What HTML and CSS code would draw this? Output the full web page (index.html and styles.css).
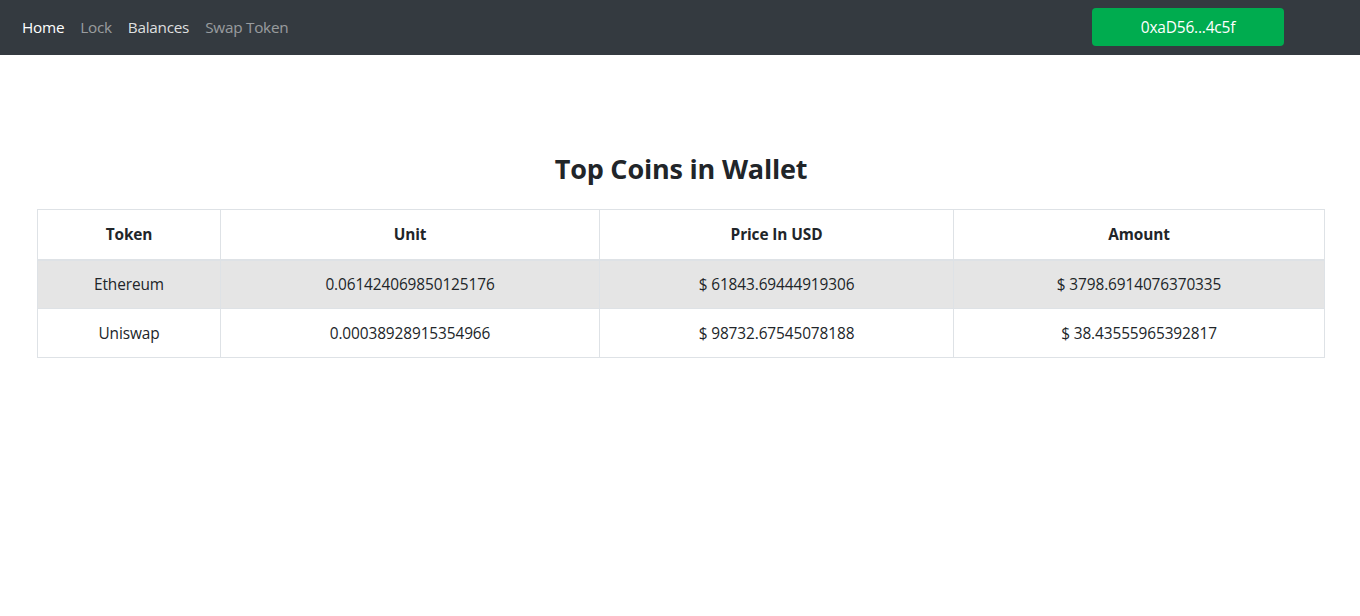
FILE: index.html
```html
<!DOCTYPE html>
<html lang="en">
<head>
<meta charset="utf-8">
<title>Top Coins in Wallet</title>
<link rel="stylesheet" href="styles.css">
</head>
<body>
<nav class="navbar">
  <div class="nav-links">
    <a class="nav-link active" href="#">Home</a>
    <a class="nav-link" href="#">Lock</a>
    <a class="nav-link hover" href="#">Balances</a>
    <a class="nav-link" href="#">Swap Token</a>
  </div>
  <button class="wallet-btn" type="button">0xaD56...4c5f</button>
</nav>
<main class="content">
  <h1 class="title">Top Coins in Wallet</h1>
  <table class="coins">
    <thead>
      <tr>
        <th class="c1">Token</th>
        <th class="c2">Unit</th>
        <th class="c3">Price In USD</th>
        <th class="c4">Amount</th>
      </tr>
    </thead>
    <tbody>
      <tr class="striped">
        <td>Ethereum</td>
        <td>0.061424069850125176</td>
        <td>$ 61843.69444919306</td>
        <td>$ 3798.6914076370335</td>
      </tr>
      <tr>
        <td>Uniswap</td>
        <td>0.00038928915354966</td>
        <td>$ 98732.67545078188</td>
        <td>$ 38.43555965392817</td>
      </tr>
    </tbody>
  </table>
</main>
</body>
</html>
```

FILE: styles.css
```css
* { box-sizing: border-box; }
body {
  margin: 0;
  font-family: "Open Sans", "Noto Sans", "Liberation Sans", sans-serif;
  font-size: 15px;
  color: #212529;
  background: #fff;
}
.navbar {
  height: 55px;
  background: #343a40;
  display: flex;
  align-items: center;
  justify-content: space-between;
  padding: 0 76px 0 22px;
}
.nav-links {
  display: flex;
  gap: 16px;
  margin-top: -1px;
}
.nav-link {
  color: rgba(255, 255, 255, 0.5);
  text-decoration: none;
  font-size: 15.3px;
  letter-spacing: -0.25px;
}
.nav-link.active { color: #fff; }
.nav-link.hover { color: rgba(255, 255, 255, 0.85); }
.wallet-btn {
  width: 192px;
  height: 38px;
  margin-bottom: 1px;
  background: #00ac4f;
  color: #fff;
  border: 0;
  border-radius: 4px;
  font-family: inherit;
  font-size: 15.5px;
  letter-spacing: -0.2px;
}
.content {
  padding: 0 35px 0 37px;
}
.title {
  margin: 97px 0 23px;
  text-align: center;
  font-size: 27px;
  font-weight: 700;
  line-height: 34px;
  letter-spacing: -0.2px;
  color: #212529;
}
.coins {
  width: 100%;
  border-collapse: collapse;
  text-align: center;
  font-size: 15.4px;
}
.coins th, .coins td {
  border: 1px solid #dee2e6;
  height: 49px;
  padding: 0 12px;
  vertical-align: middle;
  letter-spacing: -0.1px;
}
.coins th {
  font-weight: 700;
  height: 50px;
  border-bottom-width: 2px;
}
.coins .c1 { width: 183px; }
.coins .c2 { width: 379px; }
.coins .c3 { width: 354px; }
.striped td { background: #e5e5e5; }
```
